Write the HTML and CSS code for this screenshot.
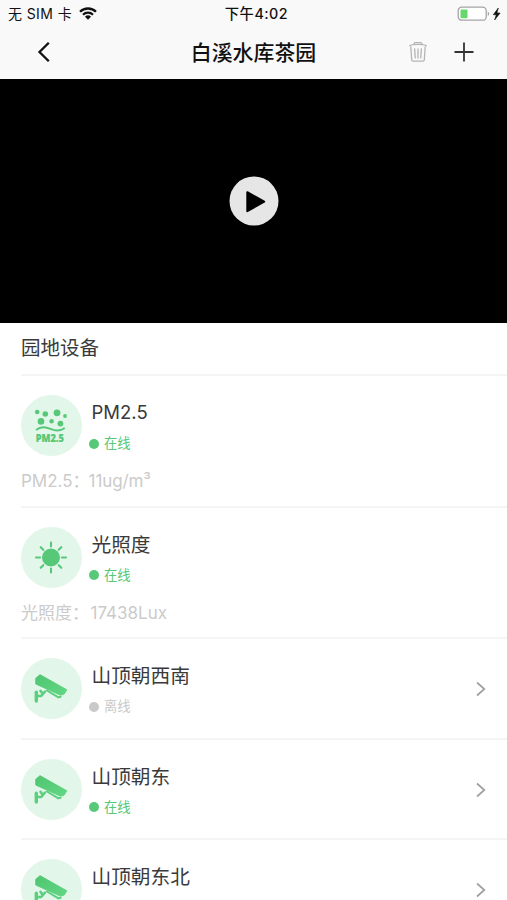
FILE: index.html
```html
<!DOCTYPE html>
<html lang="zh-CN">
<head>
<meta charset="utf-8">
<title>白溪水库茶园</title>
<link rel="stylesheet" href="styles.css">
</head>
<body>
<svg width="0" height="0" class="defs" aria-hidden="true">
  <defs>
    <linearGradient id="leaf" x1="0" y1="0" x2="1" y2="1"><stop offset="0" stop-color="#4fc471"/><stop offset="1" stop-color="#63d884"/></linearGradient>
    <symbol id="camera" viewBox="0 0 61 61">
      <path fill="url(#leaf)" stroke="url(#leaf)" stroke-width="1" stroke-linejoin="round" d="M19 16.7 45.8 31.8 43.2 36 39.5 37.2 14.8 26 14.8 20.3Z"/>
      <path fill="none" stroke="#5bcf7d" stroke-width="2" stroke-linecap="round" stroke-linejoin="round" d="M26 32.5 37.4 39.4 39.6 38.8"/>
      <path fill="none" stroke="#5bcf7d" stroke-width="3.4" stroke-linecap="round" d="M15.3 34.2v8.8"/>
      <path fill="none" stroke="#5bcf7d" stroke-width="2.5" stroke-linecap="round" stroke-linejoin="round" d="M16 38h4.2l3.8-4.5M19.5 32.8l1.8 2.5"/>
    </symbol>
  </defs>
</svg>
<header class="top">
  <div class="status">
    <div class="carrier"><span>无 SIM 卡</span>
      <svg class="wifi" width="18" height="13" viewBox="0 0 18 13" fill="none" stroke="#111" stroke-width="2.3"><path d="M1 4.8a11.3 11.3 0 0 1 16 0M4 7.8a7 7 0 0 1 10 0"/><path fill="#111" stroke="none" d="M6 9.8a4.3 4.3 0 0 1 6 0l-3 3z"/></svg>
    </div>
    <div class="time">下午4:02</div>
    <svg class="battery" width="45" height="16" viewBox="0 0 45 16"><rect x="1.2" y="1.2" width="28" height="13" rx="3.5" fill="#fff" stroke="#a5a5a5" stroke-width="1.3"/><rect x="3.5" y="3.5" width="7" height="8.7" rx="1" fill="#68d76c"/><path d="M30.8 5.5q2.5 2.3 0 4.6z" fill="#999"/><path d="M41.3 2 36.3 8.7h3L37.6 14l5.5-7h-3.2z" fill="#111" stroke="#111" stroke-width=".6"/></svg>
  </div>
  <nav class="nav">
    <svg class="back" width="16" height="24" viewBox="0 0 16 24"><path d="M13.8 2.7 4.5 12l9.3 9.3" fill="none" stroke="#111" stroke-width="2.3"/></svg>
    <h1>白溪水库茶园</h1>
    <div class="actions">
      <svg width="20" height="22" viewBox="0 0 20 22" fill="none" stroke="#b4b4b4" stroke-width="1.3"><path d="M1.2 4.9Q4 3.4 10 3.4t8.8 1.5M5.4 3.8 6.9 1.6h6.2l1.5 2.2M2.8 5.5 3.7 19q.1 1.2 1.3 1.2h10q1.2 0 1.3-1.2L17.2 5.5M6.6 7.4l.7 10M10 7.4v10M13.4 7.4l-.7 10"/></svg>
      <svg width="22" height="22" viewBox="0 0 22 22"><path d="M1.5 11h19M11 1.5v19" stroke="#333" stroke-width="1.8"/></svg>
    </div>
  </nav>
</header>
<section class="video">
  <svg width="50" height="50" viewBox="0 0 50 50"><circle cx="25" cy="25" r="24.5" fill="#e6e6e6"/><path d="M18.3 16.2v19L35.2 25.7z" fill="#000" stroke="#000" stroke-width="2" stroke-linejoin="round"/></svg>
</section>
<main>
  <h2>园地设备</h2>
  <article class="device sensor">
    <div class="row">
      <svg class="icon" viewBox="0 0 61 61">
        <g fill="#56c878"><circle cx="16.2" cy="17" r="2.3"/><circle cx="24.3" cy="19" r="2.8"/><circle cx="36" cy="17.8" r="3.4"/><circle cx="44" cy="21" r="1.9"/><circle cx="20" cy="26.4" r="3.3"/><circle cx="30.6" cy="26.3" r="2.2"/><circle cx="39.4" cy="28.6" r="2.9"/></g>
        <path d="M15 35c5-4.2 9.8-3 15.2-.8 5 2.1 9 2 13.6-1.2" fill="none" stroke="#56c878" stroke-width="1.9"/>
        <text x="14.8" y="46.8" textLength="28" lengthAdjust="spacingAndGlyphs" class="pm">PM2.5</text>
      </svg>
      <div class="info"><h3 class="latin">PM2.5</h3><p class="state">在线</p></div>
    </div>
    <p class="reading">PM2.5：<span class="pm-value">11ug/m³</span></p>
  </article>
  <article class="device sensor">
    <div class="row">
      <svg class="icon" viewBox="0 0 61 61">
        <circle cx="30" cy="30.5" r="9" fill="#56c878"/>
        <path d="M30 15.5v4M30 41.5v4M15 30.5h4M41 30.5h4M19.7 20.2l2.6 2.6M37.7 38.2l2.6 2.6M40.3 20.2l-2.6 2.6M22.3 38.2l-2.6 2.6" stroke="#56c878" stroke-width="2.1" stroke-linecap="round"/>
      </svg>
      <div class="info"><h3>光照度</h3><p class="state">在线</p></div>
    </div>
    <p class="reading">光照度：<span class="lux-value">17438Lux</span></p>
  </article>
  <article class="device">
    <div class="row">
      <svg class="icon" viewBox="0 0 61 61"><use href="#camera"/></svg>
      <div class="info"><h3>山顶朝西南</h3><p class="state offline">离线</p></div>
      <svg class="more" width="12" height="16" viewBox="0 0 12 16"><path d="M2 1.5 9.3 8 2 14.5"/></svg>
    </div>
  </article>
  <article class="device">
    <div class="row">
      <svg class="icon" viewBox="0 0 61 61"><use href="#camera"/></svg>
      <div class="info"><h3>山顶朝东</h3><p class="state">在线</p></div>
      <svg class="more" width="12" height="16" viewBox="0 0 12 16"><path d="M2 1.5 9.3 8 2 14.5"/></svg>
    </div>
  </article>
  <article class="device">
    <div class="row">
      <svg class="icon" viewBox="0 0 61 61"><use href="#camera"/></svg>
      <div class="info"><h3>山顶朝东北</h3></div>
      <svg class="more" width="12" height="16" viewBox="0 0 12 16"><path d="M2 1.5 9.3 8 2 14.5"/></svg>
    </div>
  </article>
</main>
</body>
</html>
```
FILE: styles.css
```css
* { box-sizing: border-box; margin: 0; padding: 0; }
html, body { height: 900px; overflow: hidden; }
body {
  display: flex;
  flex-direction: column;
  background: #fff;
  color: #3a3a3a;
  font-family: Inter, "Noto Sans CJK SC", sans-serif;
}
svg { display: block; flex: none; }
.defs { position: absolute; }
.top { flex: none; height: 79px; background: #f9f9f9; }
.status {
  display: grid;
  grid-template-columns: 1fr auto 1fr;
  align-items: center;
  height: 27px;
  padding: 0 5px 0 8px;
  font-size: 14px;
  line-height: 27px;
  color: #111;
}
.carrier { display: flex; align-items: center; gap: 7px; }
.carrier span { letter-spacing: .4px; }
.time { margin-left: 3px; font-weight: 500; font-size: 14.3px; letter-spacing: .5px; }
.battery { justify-self: end; }
.nav {
  display: grid;
  grid-template-columns: 1fr auto 1fr;
  align-items: center;
  height: 50px;
  padding: 0 32px 0 35px;
}
.nav h1 { margin-left: -3px; padding-top: 2px; color: #111; font-size: 20.9px; font-weight: 500; line-height: 48px; }
.actions { display: flex; align-items: center; justify-content: flex-end; gap: 25px; }
.video {
  display: flex;
  flex: none;
  align-items: center;
  justify-content: center;
  height: 244px;
  background: #000;
}
main { flex: none; padding-left: 21px; }
h2 {
  height: 53px;
  border-bottom: 2px solid #f5f5f5;
  font-size: 19.5px;
  font-weight: 400;
  line-height: 51px;
}
.device { height: 100.3px; padding-top: 19px; border-bottom: 2px solid #f5f5f5; }
.sensor { height: 131.7px; }
.row { display: flex; height: 61px; }
.icon { width: 61px; height: 61px; border-radius: 50%; background: #e2f6ea; }
.pm { fill: #56c878; stroke: #56c878; stroke-width: .2px; font: 800 10.2px "Open Sans", sans-serif; }
.info { flex: 1; padding-left: 9.5px; }
h3 { height: 34px; font-size: 19.7px; font-weight: 400; line-height: 37px; }
.latin { font-size: 18.5px; line-height: 34px; }
.state {
  display: flex;
  align-items: center;
  gap: 5px;
  height: 29px;
  margin-left: -2.5px;
  color: #56c878;
  font-size: 13.3px;
  line-height: 29px;
}
.state::before { content: ""; width: 10px; height: 10px; border-radius: 50%; background: currentColor; }
.offline { color: #c9c9c9; }
.more { margin: 23px 20px 0 0; fill: none; stroke: #a0a0a0; stroke-width: 1.7px; }
.reading { margin-top: 11px; color: #cbcbcb; font-size: 17px; line-height: 28px; }
.pm-value { margin-left: -1px; letter-spacing: -.1px; }
.lux-value { margin-left: 1.5px; }
```
